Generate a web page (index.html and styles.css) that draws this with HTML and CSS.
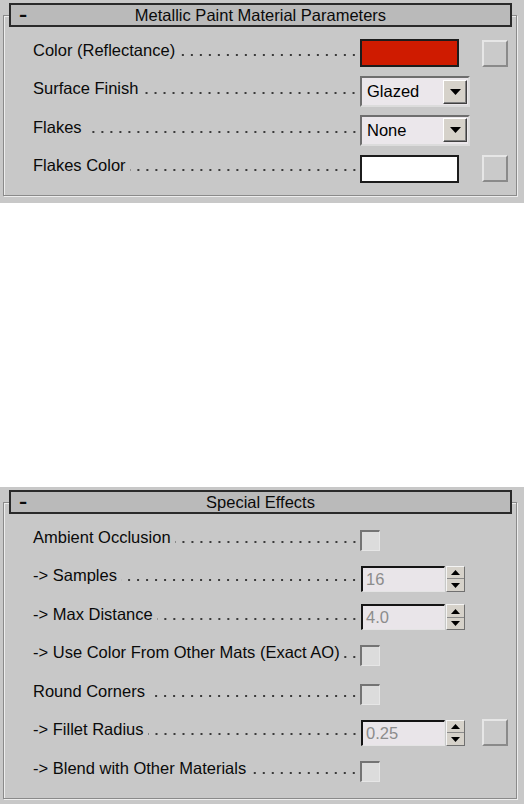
FILE: index.html
```html
<!DOCTYPE html>
<html>
<head>
<meta charset="utf-8">
<link rel="stylesheet" href="styles.css">
</head>
<body>
<div class="rollout">
  <div class="title"><span class="minus">-</span><span class="title-text">Metallic Paint Material Parameters</span><span></span></div>
  <div class="group">
    <div class="row">
      <div class="lbl"><span>Color (Reflectance)</span><i class="leader"></i></div>
      <div class="ctrl"><div class="swatch red"></div><div class="sqbtn"></div></div>
    </div>
    <div class="row">
      <div class="lbl"><span>Surface Finish</span><i class="leader"></i></div>
      <div class="ctrl"><div class="dropdown"><span>Glazed</span><div class="dd-btn"><svg width="11" height="6" viewBox="0 0 11 6"><path d="M0 0H11L5.5 6Z" fill="#000"/></svg></div></div></div>
    </div>
    <div class="row">
      <div class="lbl"><span>Flakes</span><i class="leader"></i></div>
      <div class="ctrl"><div class="dropdown"><span>None</span><div class="dd-btn"><svg width="11" height="6" viewBox="0 0 11 6"><path d="M0 0H11L5.5 6Z" fill="#000"/></svg></div></div></div>
    </div>
    <div class="row">
      <div class="lbl"><span>Flakes Color</span><i class="leader"></i></div>
      <div class="ctrl"><div class="swatch white"></div><div class="sqbtn"></div></div>
    </div>
  </div>
</div>

<div class="rollout second">
  <div class="title"><span class="minus">-</span><span class="title-text">Special Effects</span><span></span></div>
  <div class="group">
    <div class="row">
      <div class="lbl"><span>Ambient Occlusion</span><i class="leader"></i></div>
      <div class="ctrl"><div class="chk"></div></div>
    </div>
    <div class="row">
      <div class="lbl"><span>-&gt; Samples</span><i class="leader"></i></div>
      <div class="ctrl"><div class="spin"><div class="spin-field">16</div><div class="spin-btn"><div class="half"><svg width="9" height="5" viewBox="0 0 9 5"><path d="M0 5H9L4.5 0Z" fill="#000"/></svg></div><div class="half"><svg width="9" height="5" viewBox="0 0 9 5"><path d="M0 0H9L4.5 5Z" fill="#000"/></svg></div></div></div></div>
    </div>
    <div class="row">
      <div class="lbl"><span>-&gt; Max Distance</span><i class="leader"></i></div>
      <div class="ctrl"><div class="spin"><div class="spin-field">4.0</div><div class="spin-btn"><div class="half"><svg width="9" height="5" viewBox="0 0 9 5"><path d="M0 5H9L4.5 0Z" fill="#000"/></svg></div><div class="half"><svg width="9" height="5" viewBox="0 0 9 5"><path d="M0 0H9L4.5 5Z" fill="#000"/></svg></div></div></div></div>
    </div>
    <div class="row">
      <div class="lbl"><span>-&gt; Use Color From Other Mats (Exact AO)</span><i class="leader"></i></div>
      <div class="ctrl"><div class="chk"></div></div>
    </div>
    <div class="row">
      <div class="lbl"><span>Round Corners</span><i class="leader"></i></div>
      <div class="ctrl"><div class="chk"></div></div>
    </div>
    <div class="row">
      <div class="lbl"><span>-&gt; Fillet Radius</span><i class="leader"></i></div>
      <div class="ctrl"><div class="spin"><div class="spin-field">0.25</div><div class="spin-btn"><div class="half"><svg width="9" height="5" viewBox="0 0 9 5"><path d="M0 5H9L4.5 0Z" fill="#000"/></svg></div><div class="half"><svg width="9" height="5" viewBox="0 0 9 5"><path d="M0 0H9L4.5 5Z" fill="#000"/></svg></div></div></div><div class="sqbtn"></div></div>
    </div>
    <div class="row">
      <div class="lbl"><span>-&gt; Blend with Other Materials</span><i class="leader"></i></div>
      <div class="ctrl"><div class="chk"></div></div>
    </div>
  </div>
</div>
</body>
</html>
```

FILE: styles.css
```css
html, body {
  margin: 0;
  background: #ffffff;
}
body {
  font-family: "Liberation Sans", Arial, sans-serif;
  font-size: 16.5px;
  color: #0a0a0a;
}
.rollout {
  background: #c8c8c8;
  padding: 3px 7px 7px 3px;
}
.rollout.second {
  margin-top: 284px;
}
.title {
  position: relative;
  z-index: 1;
  margin: 0 5px 0 6px;
  height: 24px;
  box-sizing: border-box;
  border: 2px solid #2a2a2a;
  background: #bababa;
  display: grid;
  grid-template-columns: 1fr auto 1fr;
  align-items: center;
  line-height: 20px;
}
.minus {
  justify-self: start;
  display: inline-block;
  margin-left: 8px;
  font-size: 19px;
  font-weight: bold;
  transform: scaleX(1.3);
  transform-origin: left center;
}
.title-text {
  white-space: nowrap;
}
.group {
  margin-top: -12px;
  border: 1px solid #8a8a8a;
  box-shadow: 1px 1px 0 #ededed, inset 1px 1px 0 #ededed;
  padding: 15px 8px 10px 29px;
}
.row {
  display: grid;
  grid-template-columns: 1fr 148px;
  align-items: center;
  height: 38.5px;
}
.lbl {
  display: flex;
  align-items: baseline;
  white-space: nowrap;
}
.leader {
  flex: 1;
  height: 2px;
  margin-left: 4px;
  margin-right: 1px;
  background: linear-gradient(90deg, transparent 3px, #3a3a3a 3px, #3a3a3a 5px, transparent 5px) right bottom / 9px 2px repeat-x;
}
.ctrl {
  display: flex;
  align-items: center;
  padding-top: 6px;
}
.sqbtn {
  margin-left: auto;
  width: 26px;
  height: 27px;
  box-sizing: border-box;
  border: 2px solid;
  border-color: #e6e6e6 #8a8a8a #8a8a8a #e6e6e6;
  background: #cacaca;
}
.swatch {
  width: 99px;
  height: 28px;
  box-sizing: border-box;
  border: 2px solid #1c1c1c;
}
.red {
  background: #cf1b00;
}
.white {
  background: #ffffff;
}
.dropdown {
  width: 110px;
  height: 31px;
  box-sizing: border-box;
  border: 2px solid;
  border-color: #6e6e6e #dcdcdc #dcdcdc #6e6e6e;
  background: #ebe7eb;
  display: flex;
  align-items: center;
  justify-content: space-between;
  padding: 0 1px 0 5px;
  color: #000;
}
.dd-btn {
  width: 24px;
  height: 24px;
  box-sizing: border-box;
  border: 1px solid;
  border-color: #ffffff #404040 #404040 #ffffff;
  box-shadow: inset -1px -1px 0 #808080;
  background: #d6d2ca;
  display: flex;
  align-items: center;
  justify-content: center;
}
.spin {
  display: flex;
  margin-left: 1px;
}
.spin-field {
  width: 84px;
  height: 26px;
  box-sizing: border-box;
  border-style: solid;
  border-width: 2px 1px 1px 2px;
  border-color: #141414 #e4e4e4 #e4e4e4 #141414;
  background: #e9e5e9;
  color: #8c8c8c;
  padding-left: 3px;
  display: flex;
  align-items: center;
}
.spin-btn {
  width: 19px;
  height: 26px;
  margin-left: 1px;
  box-sizing: border-box;
  border: 1px solid;
  border-color: #f4f4f4 #707070 #707070 #f4f4f4;
  background: #d6d2ca;
  display: flex;
  flex-direction: column;
}
.half {
  flex: 1;
  display: flex;
  align-items: center;
  justify-content: center;
}
.half + .half {
  border-top: 1px solid #8a8a8a;
}
.chk {
  width: 20px;
  height: 21px;
  box-sizing: border-box;
  border-style: solid;
  border-width: 2px 1px 1px 2px;
  border-color: #747474 #e6e6e6 #e6e6e6 #747474;
  background: #dcdcdc;
}
```
